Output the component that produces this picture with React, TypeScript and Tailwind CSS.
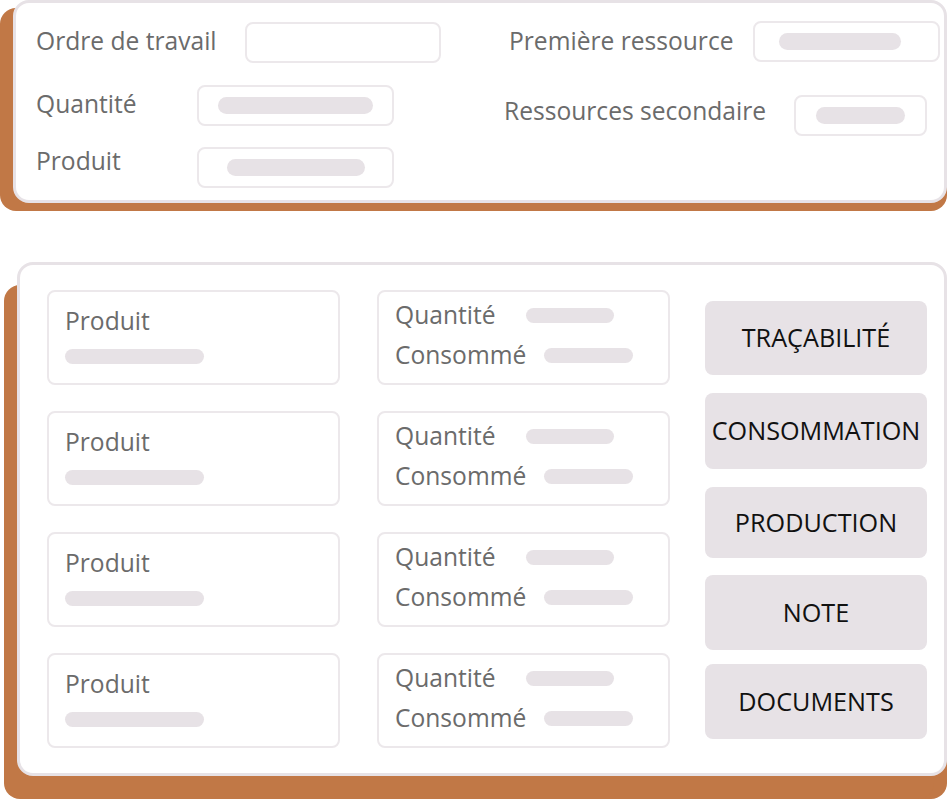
const label = "text-[24.6px] leading-none text-[#6b6b6b] whitespace-nowrap";
const field = "rounded-lg border-2 border-[#ece8eb] bg-white flex items-center";
const bar = "h-[17px] rounded-full bg-[#e7e2e6]";

function ProductBox() {
  return (
    <div className="w-[293px] h-[95px] rounded-lg border-2 border-[#ece8eb] pl-[16px] pt-[17px]">
      <div className={label}>Produit</div>
      <div className="mt-[15px] w-[139px] h-[15px] rounded-full bg-[#e7e2e6]" />
    </div>
  );
}

function QuantityBox() {
  return (
    <div className="w-[293px] h-[95px] rounded-lg border-2 border-[#ece8eb] pl-[16px] pt-[11px]">
      <div className="flex items-center">
        <span className={`${label} w-[131px]`}>Quantité</span>
        <div className="w-[88px] h-[15px] rounded-full bg-[#e7e2e6] mt-[1px]" />
      </div>
      <div className="flex items-center mt-[15px]">
        <span className={`${label} w-[149px]`}>Consommé</span>
        <div className="w-[89px] h-[15px] rounded-full bg-[#e7e2e6] mt-[1px]" />
      </div>
    </div>
  );
}

const actions = [
  { name: "TRAÇABILITÉ", h: "h-[74px]", mt: "mt-0" },
  { name: "CONSOMMATION", h: "h-[76px]", mt: "mt-[18px]" },
  { name: "PRODUCTION", h: "h-[71px]", mt: "mt-[18px]" },
  { name: "NOTE", h: "h-[75px]", mt: "mt-[17px]" },
  { name: "DOCUMENTS", h: "h-[75px]", mt: "mt-[14px]" },
];

export default function App() {
  return (
    <div className="w-[949px] h-[799px] bg-white overflow-hidden font-['Open_Sans',sans-serif]">
      {/* work order header */}
      <div className="pl-[13px] pr-[2px]">
        <div className="h-[203px] rounded-2xl border-[3px] border-[#e7e2e6] bg-white shadow-[-13px_8px_0_#c17846,0_8px_0_#c17846] flex">
          <div className="w-[488px] pl-[20px] pt-[19px]">
            <div className="flex items-center">
              <span className={`${label} w-[209px] mb-[2px]`}>Ordre de travail</span>
              <div className={`${field} w-[196px] h-[41px]`} />
            </div>
            <div className="flex items-center mt-[22px]">
              <span className={`${label} w-[161px] mb-[2px]`}>Quantité</span>
              <div className={`${field} w-[197px] h-[41px] justify-center`}>
                <div className={`${bar} w-[155px]`} />
              </div>
            </div>
            <div className="flex items-center mt-[21px]">
              <span className={`${label} w-[161px] mb-[13px]`}>Produit</span>
              <div className={`${field} w-[197px] h-[41px] justify-center`}>
                <div className={`${bar} w-[138px]`} />
              </div>
            </div>
          </div>
          <div className="pt-[18px]">
            <div className="flex items-center pl-[5px]">
              <span className={`${label} w-[244px]`}>Première ressource</span>
              <div className={`${field} w-[187px] h-[41px] pl-[24px]`}>
                <div className={`${bar} w-[122px]`} />
              </div>
            </div>
            <div className="flex items-center mt-[33px]">
              <span className={`${label} w-[290px] mb-[8px]`}>Ressources secondaire</span>
              <div className={`${field} w-[133px] h-[41px] justify-center`}>
                <div className={`${bar} w-[89px]`} />
              </div>
            </div>
          </div>
        </div>
      </div>

      {/* products and actions */}
      <div className="pl-[17px] pr-[2px] mt-[59px]">
        <div className="h-[514px] rounded-2xl border-[3px] border-[#e7e2e6] bg-white shadow-[-13px_23px_0_#c17846,0_23px_0_#c17846] flex pl-[27px] pt-[25px]">
          <div className="flex flex-col gap-[26px]">
            {[0, 1, 2, 3].map((i) => (
              <ProductBox key={i} />
            ))}
          </div>
          <div className="flex flex-col gap-[26px] ml-[37px]">
            {[0, 1, 2, 3].map((i) => (
              <QuantityBox key={i} />
            ))}
          </div>
          <div className="flex flex-col ml-[35px] pt-[11px]">
            {actions.map((a) => (
              <button
                key={a.name}
                className={`w-[222px] ${a.h} ${a.mt} rounded-lg bg-[#e7e2e6] text-[25.2px] text-[#111] flex items-center justify-center`}
              >
                {a.name}
              </button>
            ))}
          </div>
        </div>
      </div>
    </div>
  );
}
